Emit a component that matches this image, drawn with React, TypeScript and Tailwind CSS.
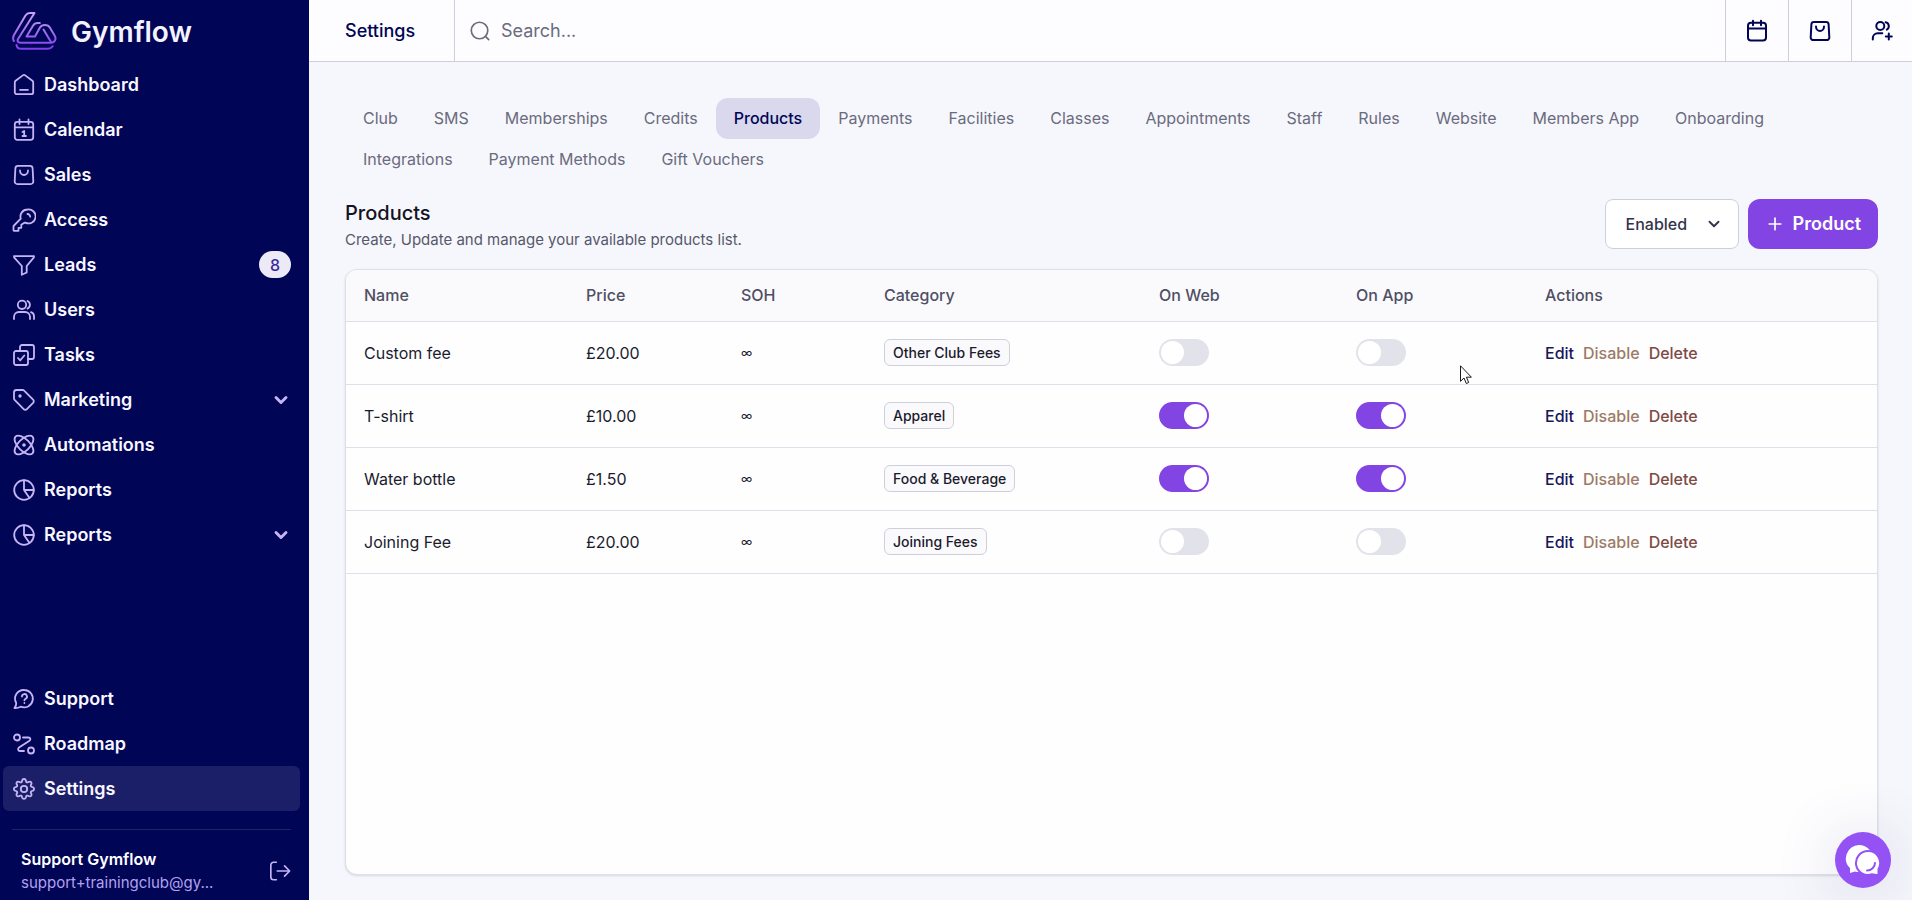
import type { ReactNode } from "react";
import { ChevronDown, Plus } from "lucide-react";

interface IconProps {
  children: ReactNode;
  className?: string;
}

function Icon({ children, className = "size-6" }: IconProps) {
  return (
    <svg
      viewBox="0 0 24 24"
      fill="none"
      stroke="currentColor"
      strokeWidth="1.8"
      strokeLinecap="round"
      strokeLinejoin="round"
      className={`shrink-0 ${className}`}
      aria-hidden="true"
    >
      {children}
    </svg>
  );
}

const bagPaths = (
  <>
    <path d="M6 2.900h12a2.600 2.600 0 0 1 2.600 2.400l.7 12.900a2.700 2.700 0 0 1-2.700 2.900H5.400a2.700 2.700 0 0 1-2.700-2.900l.7-12.900A2.600 2.600 0 0 1 6 2.900Z" />
    <path d="M8 7.500a4 4.500 0 0 0 8 0" />
  </>
);

const pieIcon = (
  <Icon>
    <circle cx="12" cy="12" r="9.800" />
    <path d="M12 2.200V12h9.800M12 12l5.500 8" />
  </Icon>
);

interface NavItem {
  label: string;
  icon: ReactNode;
  badge?: number;
  expandable?: boolean;
  active?: boolean;
}

const mainNav: NavItem[] = [
  {
    label: "Dashboard",
    icon: (
      <Icon>
        <path d="M2.800 9.300a2 2 0 0 1 .8-1.600l7.200-5.300a2 2 0 0 1 2.400 0l7.200 5.300a2 2 0 0 1 .8 1.600v9.900a2 2 0 0 1-2 2H4.800a2 2 0 0 1-2-2Z" />
        <path d="M8 16.800h8" />
      </Icon>
    ),
  },
  {
    label: "Calendar",
    icon: (
      <Icon>
        <rect x="2.800" y="3.800" width="18.400" height="18" rx="2.500" />
        <path d="M2.800 9.300h18.400M7.500 1.500v4.500M16.500 1.500v4.500M10.500 14l1.700-1v5M10.500 18h3.500" />
      </Icon>
    ),
  },
  { label: "Sales", icon: <Icon>{bagPaths}</Icon> },
  {
    label: "Access",
    icon: (
      <Icon>
        <path d="M15.500 1.500a7 7 0 0 0-6.700 9.200L2 17.500a1.500 1.500 0 0 0-.5 1V22a.8.8 0 0 0 .8.8H6.500v-3h2.800v-3l2.700-1.900 1.300-.3A7 7 0 1 0 15.500 1.500Z" />
        <path d="M15.500 6a2.700 2.700 0 0 1 2.700 2.700" />
      </Icon>
    ),
  },
  {
    label: "Leads",
    badge: 8,
    icon: (
      <Icon>
        <path d="M2 3.200h20l-.3 1.500-7 8.300v6.500l-4.900 2.300v-8.800L2.300 4.700Z" />
      </Icon>
    ),
  },
  {
    label: "Users",
    icon: (
      <Icon>
        <circle cx="10" cy="6.800" r="4.200" />
        <path d="M2 21v-2a5 5 0 0 1 5-5h6a5 5 0 0 1 5 5v2M15.500 3a4.200 4.200 0 0 1 0 7.600M19 14.200a4.500 4.500 0 0 1 3 4.500V21" />
      </Icon>
    ),
  },
  {
    label: "Tasks",
    icon: (
      <Icon>
        <rect x="2" y="8" width="14" height="14" rx="2" />
        <path d="M8 8V4a2 2 0 0 1 2-2h10a2 2 0 0 1 2 2v10a2 2 0 0 1-2 2h-4M6 15l2.200 2.300L12.300 12.500" />
      </Icon>
    ),
  },
  {
    label: "Marketing",
    expandable: true,
    icon: (
      <Icon>
        <path d="M2 4.500A2.500 2.500 0 0 1 4.500 2h6.200a2 2 0 0 1 1.400.6l9 9a2.200 2.200 0 0 1 0 3.200l-6.200 6.300a2.200 2.200 0 0 1-3.200 0l-9.100-9.200a2 2 0 0 1-.6-1.400Z" />
        <circle cx="8" cy="8" r=".8" fill="currentColor" />
      </Icon>
    ),
  },
  {
    label: "Automations",
    icon: (
      <Icon>
        <ellipse cx="12" cy="12" rx="12" ry="5.800" transform="rotate(45 12 12)" />
        <ellipse cx="12" cy="12" rx="12" ry="5.800" transform="rotate(-45 12 12)" />
        <circle cx="12" cy="12" r=".9" fill="currentColor" />
      </Icon>
    ),
  },
  { label: "Reports", icon: pieIcon },
  { label: "Reports", icon: pieIcon, expandable: true },
];

const footerNav: NavItem[] = [
  {
    label: "Support",
    icon: (
      <Icon>
        <path d="M12.300 3a8.700 8.700 0 1 1-3.600 16.700c-2 1-4 1.500-6.200 1.300 1.300-1.700 1.900-3.300 1.700-5A8.700 8.700 0 0 1 12.300 3Z" />
        <path d="M10 9.500a2.500 2.500 0 1 1 3.700 2.200c-.9.500-1.300.8-1.300 1.600M12.400 16v.1" />
      </Icon>
    ),
  },
  {
    label: "Roadmap",
    icon: (
      <Icon>
        <circle cx="5" cy="5.500" r="3" />
        <circle cx="19" cy="18.500" r="3" />
        <path d="M11 5.500h5.500c2 0 2.500 2 1 3.200L7 15.500c-1.500 1.200-1 3.500 1 3.500h4" />
      </Icon>
    ),
  },
  {
    label: "Settings",
    active: true,
    icon: (
      <Icon>
        <path d="M12 2c.9 0 1.700.6 1.900 1.500l.2.900c.3.900 1.200 1.300 2 .9l1-.5c1.600-.8 3 .8 2.300 2.200l-.5 1c-.4.900 0 1.700.9 2l.8.200c2 .6 2 3 0 3.600l-.8.2c-.9.300-1.300 1.100-.9 2l.5 1c.7 1.400-.7 3-2.300 2.200l-1-.5c-.8-.4-1.700 0-2 .9l-.2.900c-.5 1.900-3.300 1.900-3.800 0l-.2-.9c-.3-.9-1.200-1.300-2-.9l-1 .5c-1.600.8-3-.8-2.300-2.200l.5-1c.4-.9 0-1.700-.9-2l-.8-.2c-2-.6-2-3 0-3.600l.8-.2c.9-.3 1.300-1.100.9-2l-.5-1C3.900 5.600 5.300 4 6.900 4.800l1 .5c.8.4 1.700 0 2-.9l.2-.9C10.300 2.600 11.100 2 12 2Z" />
        <circle cx="12" cy="12" r="3.200" />
      </Icon>
    ),
  },
];

const tabs = [
  "Club",
  "SMS",
  "Memberships",
  "Credits",
  "Products",
  "Payments",
  "Facilities",
  "Classes",
  "Appointments",
  "Staff",
  "Rules",
  "Website",
  "Members App",
  "Onboarding",
  "Integrations",
  "Payment Methods",
  "Gift Vouchers",
];

const products = [
  { name: "Custom fee", price: "£20.00", category: "Other Club Fees", onWeb: false, onApp: false },
  { name: "T-shirt", price: "£10.00", category: "Apparel", onWeb: true, onApp: true },
  { name: "Water bottle", price: "£1.50", category: "Food & Beverage", onWeb: true, onApp: true },
  { name: "Joining Fee", price: "£20.00", category: "Joining Fees", onWeb: false, onApp: false },
];

function Logo() {
  return (
    <svg viewBox="0 0 45 38" fill="none" className="h-[38px] w-[45px] shrink-0" aria-hidden="true">
      <defs>
        <linearGradient id="logo" x1="0" y1="0" x2="0" y2="38" gradientUnits="userSpaceOnUse">
          <stop stopColor="#c9a5f5" />
          <stop offset="1" stopColor="#7c3aed" />
        </linearGradient>
      </defs>
      <g stroke="url(#logo)" strokeWidth="2" strokeLinecap="round" strokeLinejoin="round">
        <path d="M1.800 29c-1-2-.9-4 .2-6L13.500 3.500C14.600 1.800 16 1 18 1h4.500L6 27c-1 1.800 0 3.800 2 3.800h31c4 0 5.500-4 3.700-7L38 15.700c-2.200-3.700-8-3.700-10.200 0L23 24.500h-8.500L21 13.800c1-1.800 2.800-2.800 4.800-2.800h2" />
        <path d="M31.500 17.500 39 30M4.500 33c.4 2.200 1.800 3.700 4 3.700H36c2 0 3.600-.8 4.700-2.400" />
      </g>
    </svg>
  );
}

function NavLink({ label, icon, badge, expandable, active }: NavItem) {
  return (
    <a
      href="#"
      className={`flex h-[45px] items-center gap-2 rounded-md px-[9px] text-lg font-semibold text-[#f8f7ff] ${
        active ? "bg-[#1a1f68]" : ""
      }`}
    >
      <span className="text-[#c5b5f5]">{icon}</span>
      <span className="flex-1">{label}</span>
      {badge !== undefined && (
        <span className="flex h-[27px] w-8 items-center justify-center rounded-full bg-[#edeaf8] text-base font-medium text-[#3b2a9b]">
          {badge}
        </span>
      )}
      {expandable && <ChevronDown className="size-5 text-[#c5b5f5]" strokeWidth={3.5} />}
    </a>
  );
}

function Sidebar() {
  return (
    <aside className="flex w-[309px] shrink-0 flex-col bg-[#000556] pl-[3px] pr-[9px]">
      <div className="flex h-[62px] items-center gap-3.5 pl-[9px]">
        <Logo />
        <span className="pt-0.5 text-[28px] font-semibold text-[#f4f2ff]">Gymflow</span>
      </div>
      <nav>
        {mainNav.map((item, index) => (
          <NavLink key={index} {...item} />
        ))}
      </nav>
      <nav className="mt-auto">
        {footerNav.map((item) => (
          <NavLink key={item.label} {...item} />
        ))}
      </nav>
      <div className="mx-[9px] mt-[18px] flex items-center justify-between border-t border-[#1f2468] pb-1.5 pl-[9px] pt-[18px]">
        <div>
          <p className="text-base leading-[23px] font-semibold text-white">Support Gymflow</p>
          <p className="text-[15px] leading-[23px] text-[#b3a1ee]">support+trainingclub@gy...</p>
        </div>
        <button type="button" aria-label="Log out" className="text-[#c5b5f5]">
          <Icon className="size-[22px]">
            <path d="M8 2.500H5a3 3 0 0 0-3 3v13a3 3 0 0 0 3 3h3M9 12h13M17 6.500l5.500 5.500-5.500 5.500" />
          </Icon>
        </button>
      </div>
    </aside>
  );
}

function HeaderButton({ label, children }: { label: string; children: ReactNode }) {
  return (
    <button
      type="button"
      aria-label={label}
      className="flex w-[63px] items-center justify-center border-l border-[#cfcfdb] text-[#000556] last:w-[61px]"
    >
      <svg
        viewBox="0 0 24 24"
        fill="none"
        stroke="currentColor"
        strokeWidth="2"
        strokeLinecap="round"
        strokeLinejoin="round"
        className="size-6"
        aria-hidden="true"
      >
        {children}
      </svg>
    </button>
  );
}

function Header() {
  return (
    <header className="flex h-[62px] border-b border-[#cfcfdb] bg-[#fdfdff]">
      <h1 className="flex w-[146px] items-center border-r border-[#cfcfdb] pl-9 text-lg font-medium text-[#000556]">
        Settings
      </h1>
      <label className="flex flex-1 items-center gap-2.5 pl-3.5 text-[#6b6b7e]">
        <Icon className="size-[22px]">
          <circle cx="11.500" cy="11.500" r="9" />
          <path d="m18.500 18.500 3 3" />
        </Icon>
        <input
          type="search"
          aria-label="Search"
          placeholder="Search..."
          className="flex-1 bg-transparent text-lg outline-none placeholder:text-[#6b6b7e]"
        />
      </label>
      <HeaderButton label="Calendar">
        <rect x="3" y="3.800" width="18" height="17.700" rx="3" />
        <path d="M3 9.500h18M8 1.800v4.500M16 1.800v4.500" />
      </HeaderButton>
      <HeaderButton label="Sales">{bagPaths}</HeaderButton>
      <HeaderButton label="Add user">
        <circle cx="10.300" cy="7" r="4" />
        <path d="M2.800 20.500v-1.300A5 5 0 0 1 7.800 14.200h4.500M15.600 3.200a4 4 0 0 1 1.200 7.400M18.800 14.500v6M15.800 17.500h6" />
      </HeaderButton>
    </header>
  );
}

function Toggle({ label, on }: { label: string; on: boolean }) {
  return (
    <input
      type="checkbox"
      role="switch"
      aria-label={label}
      defaultChecked={on}
      className="block h-[27px] w-[50px] appearance-none rounded-full bg-[#e2e2ea] p-0.5 before:block before:size-[23px] before:rounded-full before:bg-white checked:bg-[#8344e4] checked:before:ml-[23px]"
    />
  );
}

function ProductsTable() {
  return (
    <div className="flex-1 overflow-hidden rounded-xl border border-[#dfdfe9] bg-[#fefeff] shadow-sm">
      <table className="w-full table-fixed text-left text-base">
        <thead className="bg-[#fafafd] text-[#4f4f63]">
          <tr className="h-[51px] border-b border-[#dfdfe9]">
            <th className="w-[222px] pl-[18px] font-medium">Name</th>
            <th className="w-[155px] pl-[18px] font-medium">Price</th>
            <th className="w-[143px] pl-[18px] font-medium">SOH</th>
            <th className="w-[275px] pl-[18px] font-medium">Category</th>
            <th className="w-[197px] pl-[18px] font-medium">On Web</th>
            <th className="w-[189px] pl-[18px] font-medium">On App</th>
            <th className="pl-[18px] font-medium">Actions</th>
          </tr>
        </thead>
        <tbody className="text-[#1c1b2e]">
          {products.map((product) => (
            <tr key={product.name} className="h-[63px] border-b border-[#dfdfe9]">
              <td className="pl-[18px]">{product.name}</td>
              <td className="pl-[18px]">{product.price}</td>
              <td className="pl-[18px] text-xs">∞</td>
              <td className="pl-[18px]">
                <span className="flex h-[27px] w-fit items-center rounded-md border border-[#cfcfdb] bg-[#fafafd] px-2 text-sm font-medium">
                  {product.category}
                </span>
              </td>
              <td className="pl-[18px]">
                <Toggle label={`${product.name} on web`} on={product.onWeb} />
              </td>
              <td className="pl-[18px]">
                <Toggle label={`${product.name} on app`} on={product.onApp} />
              </td>
              <td className="pl-[18px]">
                <div className="flex gap-[9px] font-medium">
                  <button type="button" className="text-[#17175c]">Edit</button>
                  <button type="button" className="text-[#9c7a66]">Disable</button>
                  <button type="button" className="text-[#7d4a45]">Delete</button>
                </div>
              </td>
            </tr>
          ))}
        </tbody>
      </table>
    </div>
  );
}

export default function App() {
  return (
    <div className="flex min-h-screen bg-[#f6f7fc] font-[Inter,sans-serif]">
      <Sidebar />
      <div className="flex min-w-0 flex-1 flex-col">
        <Header />
        <main className="flex flex-1 flex-col pb-[25px] pl-9 pr-[34px] pt-9">
          <nav className="flex flex-wrap">
            {tabs.map((tab) => (
              <a
                key={tab}
                href="#"
                className={`flex h-[41px] items-center rounded-xl px-[18px] pb-0.5 text-base ${
                  tab === "Products" ? "bg-[#d9d8ec] font-medium text-[#000556]" : "text-[#6b6b7e]"
                }`}
              >
                {tab}
              </a>
            ))}
          </nav>
          <div className="mb-4 mt-[19px] flex items-start justify-between">
            <div>
              <h2 className="text-xl leading-7 font-medium text-[#14131f]">Products</h2>
              <p className="text-[15px] leading-[26px] text-[#57576b]">
                Create, Update and manage your available products list.
              </p>
            </div>
            <div className="flex gap-[9px]">
              <div className="relative">
                <select
                  aria-label="Status"
                  className="h-[50px] w-[134px] appearance-none rounded-lg border border-[#cfcfdb] bg-white pl-5 text-base font-medium text-[#35344a]"
                >
                  <option>Enabled</option>
                  <option>Disabled</option>
                </select>
                <ChevronDown
                  className="pointer-events-none absolute right-4 top-4 size-[18px] text-[#35344a]"
                  strokeWidth={2.5}
                />
              </div>
              <button
                type="button"
                className="flex h-[50px] items-center gap-2 rounded-xl bg-[#8344e4] px-[17px] text-lg font-semibold text-white"
              >
                <Plus className="size-5" />
                Product
              </button>
            </div>
          </div>
          <ProductsTable />
        </main>
      </div>

      <button
        type="button"
        aria-label="Open chat"
        className="fixed bottom-3 right-[21px] flex size-14 items-center justify-center rounded-full bg-[#9452f5] shadow-[0_4px_64px_rgba(60,50,120,0.2)]"
      >
        <svg viewBox="0 0 36 32" className="h-8 w-9" aria-hidden="true">
          <path d="M14 1a14 13.500 0 0 0-9 23l0 5 5-1.500A14 13.500 0 1 0 14 1Z" fill="#fff" />
          <path
            d="M23 7a12 12 0 1 0 4 23.300l6.500 1V25A12 12 0 0 0 23 7Z"
            fill="#fff"
            stroke="#9452f5"
            strokeWidth="2"
          />
          <path d="M30 19c0 4-3.500 7.500-8 7.500" fill="none" stroke="#9452f5" strokeWidth="2" strokeLinecap="round" />
        </svg>
      </button>

      <svg viewBox="0 0 12 19" className="pointer-events-none absolute left-[1460px] top-[365px] h-[19px] w-3" aria-hidden="true">
        <path
          d="M.5.800v15.500l3.500-3.300 2.300 5.500 2.400-1-2.300-5.300h5Z"
          fill="#fff"
          stroke="#1a1a1a"
          strokeLinejoin="round"
        />
      </svg>
    </div>
  );
}
